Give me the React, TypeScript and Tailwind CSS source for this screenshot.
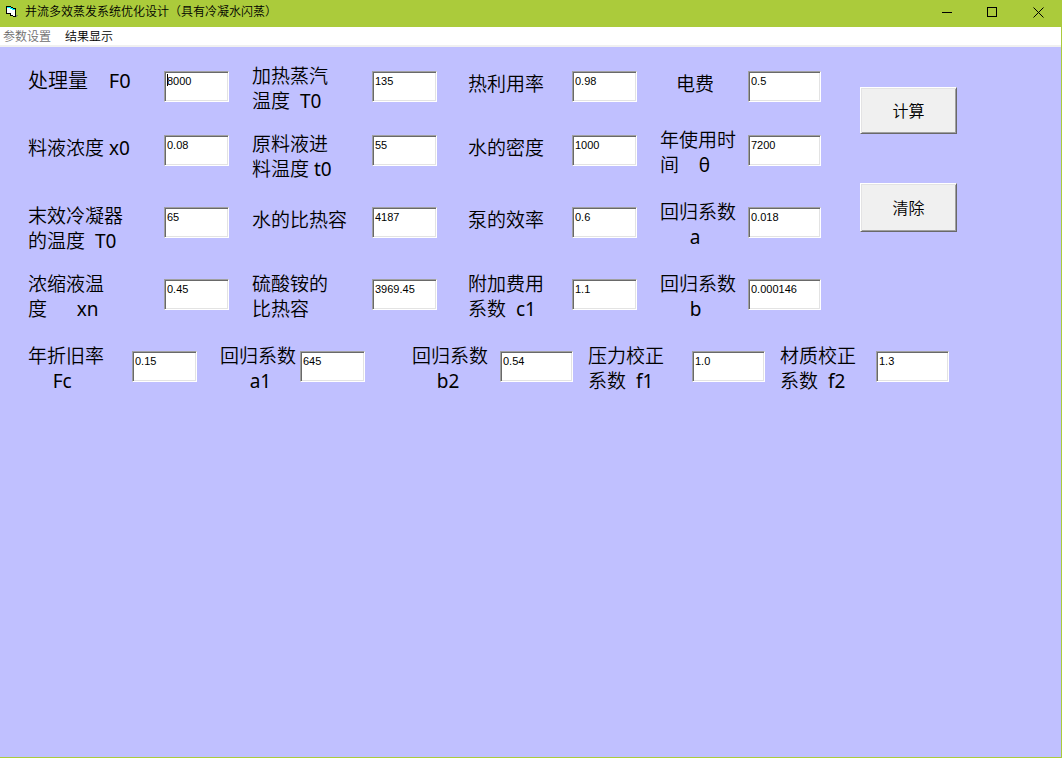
import { useState } from 'react';

type Field = {
  id: string;
  label: string;
  value: string;
  labelClass?: string;
  inputClass?: string;
  active?: boolean;
};

const gridFields: Field[] = [
  { id: 'F0', label: '处理量    F0', value: '8000', labelClass: 'pt-1 text-[20px]', active: true },
  { id: 'T0s', label: '加热蒸汽\n温度  T0', value: '135' },
  { id: 'eta', label: '热利用率', value: '0.98', labelClass: 'pt-2' },
  { id: 'price', label: '电费', value: '0.5', labelClass: 'pt-2 pl-4' },

  { id: 'x0', label: '料液浓度 x0', value: '0.08', labelClass: 'pt-2' },
  { id: 't0', label: '原料液进\n料温度 t0', value: '55', labelClass: 'pt-1' },
  { id: 'rho', label: '水的密度', value: '1000', labelClass: 'pt-2' },
  { id: 'theta', label: '年使用时\n间    θ', value: '7200' },

  { id: 'T0c', label: '末效冷凝器\n的温度  T0', value: '65', labelClass: 'pt-1' },
  { id: 'cpw', label: '水的比热容', value: '4187', labelClass: 'pt-2' },
  { id: 'pump', label: '泵的效率', value: '0.6', labelClass: 'pt-2' },
  { id: 'a', label: '回归系数\n      a', value: '0.018' },

  { id: 'xn', label: '浓缩液温\n度      xn', value: '0.45' },
  { id: 'cps', label: '硫酸铵的\n比热容', value: '3969.45' },
  { id: 'c1', label: '附加费用\n系数  c1', value: '1.1' },
  { id: 'b', label: '回归系数\n      b', value: '0.000146' },
];

const lastRow: Field[] = [
  { id: 'Fc', label: '年折旧率\n     Fc', value: '0.15', labelClass: 'w-[104px]', inputClass: 'w-[65px] mr-[23px]' },
  { id: 'a1', label: '回归系数\n      a1', value: '645', labelClass: 'w-20', inputClass: 'w-[65px] mr-[47px]' },
  { id: 'b2', label: '回归系数\n     b2', value: '0.54', labelClass: 'w-[88px]', inputClass: 'w-[73px] mr-[15px]' },
  { id: 'f1', label: '压力校正\n系数  f1', value: '1.0', labelClass: 'w-[104px]', inputClass: 'w-[73px] mr-[15px]' },
  { id: 'f2', label: '材质校正\n系数  f2', value: '1.3', labelClass: 'w-24', inputClass: 'w-[73px]' },
];

const allFields = [...gridFields, ...lastRow];
const initialValues: Record<string, string> = Object.fromEntries(allFields.map((f) => [f.id, f.value]));
const emptyValues: Record<string, string> = Object.fromEntries(allFields.map((f) => [f.id, '']));

type FieldProps = { field: Field; value: string; onChange: (id: string, value: string) => void };

function FieldPair({ field, value, onChange }: FieldProps) {
  const [touched, setTouched] = useState(false);
  return (
    <>
      <label
        htmlFor={field.id}
        className={`block shrink-0 whitespace-pre text-[19px] leading-[25px] ${field.labelClass ?? ''}`}
      >
        {field.label}
      </label>
      <div className={`relative mt-[7px] shrink-0 ${field.inputClass ?? ''}`}>
        <input
          id={field.id}
          type="text"
          value={value}
          onFocus={() => setTouched(true)}
          onChange={(e) => onChange(field.id, e.target.value)}
          className="block h-[31px] w-full border border-t-[#a0a0a0] border-r-white border-b-white border-l-[#a0a0a0] bg-white pr-0 pb-[11px] pl-[2px] font-['Liberation_Sans',sans-serif] text-[11px] leading-4 shadow-[inset_1px_1px_0_#696969,inset_-1px_-1px_0_#e3e3e3] outline-none"
        />
        {field.active && !touched && <span className="absolute top-[3px] left-[3px] h-3 w-px bg-black" />}
      </div>
    </>
  );
}

function PushButton({ children, onClick, className }: { children: string; onClick?: () => void; className: string }) {
  return (
    <button
      type="button"
      onClick={onClick}
      className={`w-[97px] border border-t-white border-r-[#696969] border-b-[#696969] border-l-white bg-[#f0f0f0] text-base shadow-[inset_1px_1px_0_#e3e3e3,inset_-1px_-1px_0_#a0a0a0] ${className}`}
    >
      {children}
    </button>
  );
}

function FormIcon() {
  return (
    <svg width="14" height="14" viewBox="0 0 14 14" shapeRendering="crispEdges" aria-hidden="true">
      <path d="M10 10h3v1h-1v1h-2z" fill="#7f8a5a" />
      <path d="M1 1h5v1h2v1h3v9H8v-1H5V9H1z" fill="#000" />
      <path d="M2 3h3v1h2v1h3v6H8v-1H6V8H2z" fill="#fff" />
      <path d="M2 2h4v1h2v1h2v1H7V4H5V3H2z" fill="#0ff" />
    </svg>
  );
}

export default function App() {
  const [values, setValues] = useState(initialValues);
  const update = (id: string, value: string) => setValues((v) => ({ ...v, [id]: value }));

  return (
    <div className="flex min-h-screen flex-col bg-[#abcb3b] pr-px pb-px font-['Noto_Sans','Noto_Sans_CJK_SC_DemiLight','Noto_Sans_CJK_SC_Light','Noto_Sans_CJK_SC',sans-serif] text-black">
      <header className="flex h-[27px] items-center pl-[5px]">
        <span className="pb-1">
          <FormIcon />
        </span>
        <h1 className="ml-1.5 grow pb-[3px] text-xs leading-4 whitespace-nowrap">并流多效蒸发系统优化设计（具有冷凝水闪蒸）</h1>
        <button type="button" aria-label="最小化" className="flex h-6 w-[45px] items-center justify-center self-start">
          <svg width="11" height="11" shapeRendering="crispEdges">
            <path d="M0 5h10v1H0z" />
          </svg>
        </button>
        <button type="button" aria-label="最大化" className="flex h-6 w-[45px] items-center justify-center self-start">
          <svg width="11" height="11" shapeRendering="crispEdges">
            <path d="M.5 .5h9v9h-9z" fill="none" stroke="#000" />
          </svg>
        </button>
        <button type="button" aria-label="关闭" className="flex h-6 w-[46px] items-center justify-center self-start">
          <svg width="11" height="11">
            <path d="M.5 .5l10 10M10.5 .5l-10 10" fill="none" stroke="#000" />
          </svg>
        </button>
      </header>

      <nav className="flex h-5 items-start gap-3.5 border-b-2 border-[#f0f0f0] bg-white pl-[3px] text-xs leading-5">
        <button type="button" className="text-[#6d6d6d]">参数设置</button>
        <button type="button">结果显示</button>
      </nav>

      <main className="grow bg-[#c0c0ff] pt-[17px] pl-7">
        <div className="flex items-start">
          <div className="grid shrink-0 grid-cols-[136px_88px_120px_96px_104px_88px_88px_73px] grid-rows-[64px_72px_72px_72px]">
            {gridFields.map((f, i) => (
              <FieldPair
                key={f.id}
                field={{ ...f, inputClass: i % 4 === 3 ? 'w-[73px]' : 'w-[65px]' }}
                value={values[f.id]}
                onChange={update}
              />
            ))}
          </div>
          <div className="flex flex-col gap-[49px] pt-[23px] pl-[39px]">
            <PushButton className="h-[47px]">计算</PushButton>
            <PushButton className="h-[49px]" onClick={() => setValues(emptyValues)}>
              清除
            </PushButton>
          </div>
        </div>
        <div className="flex items-start">
          {lastRow.map((f) => (
            <FieldPair key={f.id} field={f} value={values[f.id]} onChange={update} />
          ))}
        </div>
      </main>
    </div>
  );
}
